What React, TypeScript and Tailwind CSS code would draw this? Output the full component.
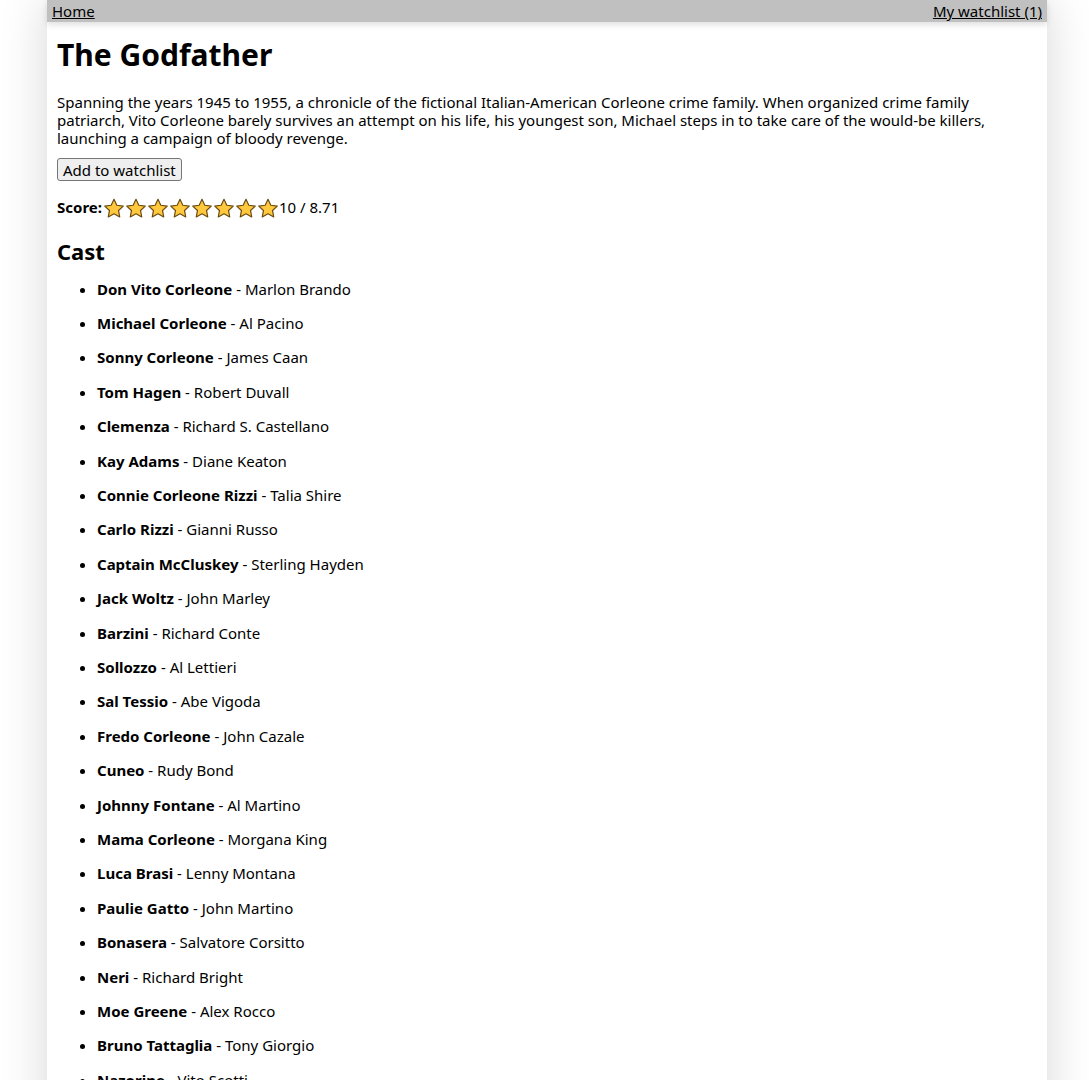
const cast: [string, string][] = [
  ["Don Vito Corleone", "Marlon Brando"],
  ["Michael Corleone", "Al Pacino"],
  ["Sonny Corleone", "James Caan"],
  ["Tom Hagen", "Robert Duvall"],
  ["Clemenza", "Richard S. Castellano"],
  ["Kay Adams", "Diane Keaton"],
  ["Connie Corleone Rizzi", "Talia Shire"],
  ["Carlo Rizzi", "Gianni Russo"],
  ["Captain McCluskey", "Sterling Hayden"],
  ["Jack Woltz", "John Marley"],
  ["Barzini", "Richard Conte"],
  ["Sollozzo", "Al Lettieri"],
  ["Sal Tessio", "Abe Vigoda"],
  ["Fredo Corleone", "John Cazale"],
  ["Cuneo", "Rudy Bond"],
  ["Johnny Fontane", "Al Martino"],
  ["Mama Corleone", "Morgana King"],
  ["Luca Brasi", "Lenny Montana"],
  ["Paulie Gatto", "John Martino"],
  ["Bonasera", "Salvatore Corsitto"],
  ["Neri", "Richard Bright"],
  ["Moe Greene", "Alex Rocco"],
  ["Bruno Tattaglia", "Tony Giorgio"],
  ["Nazorine", "Vito Scotti"],
  ["Theresa Hagen", "Tere Livrano"],
  ["Philip Tattaglia", "Victor Rendina"],
  ["Lucy Mancini", "Jeannie Linero"],
];

function Star() {
  return (
    <svg width="22" height="20" viewBox="0 0 24 22" className="shrink-0">
      <path
        d="M12 1.5l3.1 6.5 7.1.9-5.2 4.9 1.3 7-6.3-3.4-6.3 3.4 1.3-7-5.2-4.9 7.1-.9z"
        fill="#ffc83d"
        stroke="#6b4a10"
        strokeWidth="1.3"
        strokeLinejoin="round"
      />
    </svg>
  );
}

export default function App() {
  return (
    <div className="min-h-screen bg-white text-black font-['Noto_Sans',sans-serif]">
      <div className="ml-[47px] w-[1000px] min-h-screen bg-white shadow-[0_0_45px_rgba(0,0,0,0.16)]">
        {/* Nav */}
        <div className="h-[22px] bg-[#c0c0c0] flex items-center justify-between px-[5px] text-[15px] leading-[22px] shadow-[0_3px_6px_rgba(0,0,0,0.12)]">
          <a href="#" className="underline">Home</a>
          <a href="#" className="underline">My watchlist (1)</a>
        </div>

        <div className="px-[10px]">
          <h1 className="mt-[14px] text-[30px] leading-[38px] font-bold">The Godfather</h1>
          <p className="mt-[19px] text-[15px] leading-[18px]">
            Spanning the years 1945 to 1955, a chronicle of the fictional Italian-American Corleone crime family. When organized crime family patriarch, Vito Corleone barely survives an attempt on his life, his youngest son, Michael steps in to take care of the would-be killers, launching a campaign of bloody revenge.
          </p>
          <button className="mt-[11px] h-[23px] px-[5px] text-[15px] leading-[20px] bg-[#efefef] border border-[#767676] rounded-[3px]">
            Add to watchlist
          </button>

          {/* Score */}
          <div className="mt-[16px] flex items-center h-[20px] text-[15px]">
            <span className="font-bold mr-[1px]">Score:</span>
            <Star /><Star /><Star /><Star /><Star /><Star /><Star /><Star />
            <span>10 / 8.71</span>
          </div>

          <h2 className="mt-[19px] text-[22px] leading-[28px] font-bold">Cast</h2>
          <ul className="mt-[7px] pl-[40px] list-disc text-[15px]">
            {cast.map(([role, actor]) => (
              <li key={role} className="leading-[34.4px]">
                <b>{role}</b> - {actor}
              </li>
            ))}
          </ul>
        </div>
      </div>
    </div>
  );
}
